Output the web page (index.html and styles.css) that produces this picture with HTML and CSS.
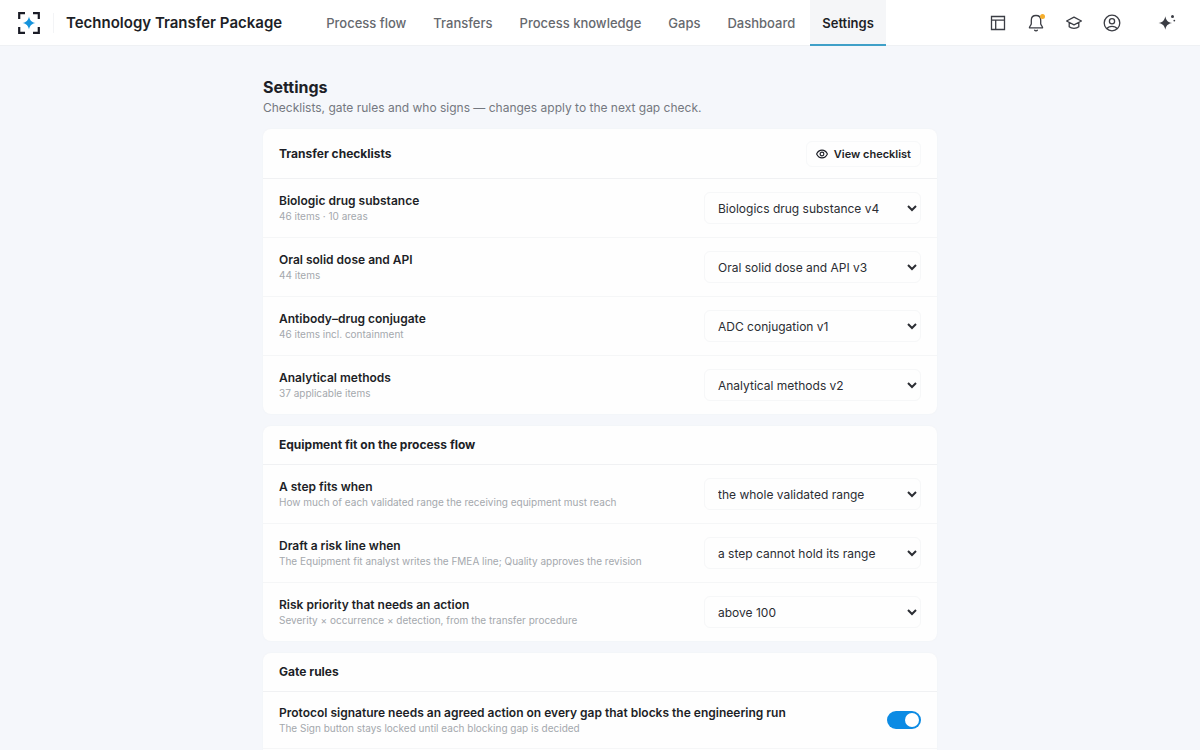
FILE: index.html
```html
<!DOCTYPE html>
<html lang="en">
<head>
<meta charset="utf-8">
<meta name="viewport" content="width=device-width, initial-scale=1">
<title>Settings – Technology Transfer Package</title>
<link rel="stylesheet" href="styles.css">
</head>
<body>
<header class="topbar">
  <a class="logo" href="#" aria-label="Home">
    <svg width="24" height="24" viewBox="0 0 24 24" fill="none">
      <path d="M2.200 8V2.200H8M16 2.200h5.800V8M21.800 16v5.800H16M8 21.800H2.200V16" stroke="#1a1c26" stroke-width="2.200"/>
      <path d="M12 5.500c.9 4 2.500 5.600 6.500 6.500-4 .9-5.600 2.500-6.500 6.500-.9-4-2.500-5.600-6.500-6.500 4-.9 5.600-2.500 6.500-6.500z" fill="#1593dc"/>
    </svg>
  </a>
  <div class="brand">Technology Transfer Package</div>
  <nav class="nav" aria-label="Main">
    <a href="#">Process flow</a>
    <a href="#">Transfers</a>
    <a href="#">Process knowledge</a>
    <a href="#">Gaps</a>
    <a href="#">Dashboard</a>
    <a href="#" class="active" aria-current="page">Settings</a>
  </nav>
  <div class="tools">
    <button type="button" aria-label="Layout">
      <svg width="18" height="18" viewBox="0 0 18 18" fill="none" stroke="currentColor" stroke-width="1.300"><path d="M2.500 2.500h13v13h-13zM2.500 6.200h13M6.700 6.200v9.300"/></svg>
    </button>
    <button type="button" class="bell" aria-label="Notifications">
      <svg width="18" height="18" viewBox="0 0 18 18" fill="none" stroke="currentColor" stroke-width="1.300" stroke-linejoin="round" stroke-linecap="round"><path d="M9 1.500c-3 0-4.700 2.100-4.700 4.800v3.400c0 1.300-1.900 2.500-1.900 4.100h13.200c0-1.600-1.900-2.800-1.900-4.100V6.300c0-2.700-1.700-4.800-4.700-4.800zM7.600 16.200c.6.900 2.200.9 2.800 0"/></svg>
      <span class="dot"></span>
    </button>
    <button type="button" aria-label="Training">
      <svg width="18" height="18" viewBox="0 0 18 18" fill="none" stroke="currentColor" stroke-width="1.300" stroke-linejoin="round"><path d="M9 3.200 16.400 7 9 10.800 1.600 7zM4.200 8.600v4.200c2.300 2.200 7.300 2.200 9.600 0V8.600"/></svg>
    </button>
    <button type="button" aria-label="Account">
      <svg width="18" height="18" viewBox="0 0 18 18" fill="none" stroke="currentColor" stroke-width="1.300"><circle cx="9" cy="9" r="7.800"/><circle cx="9" cy="7.300" r="2.600"/><path d="M4 14.800c1.600-3.300 8.400-3.300 10 0"/></svg>
    </button>
    <button type="button" class="assistant" aria-label="Assistant">
      <svg width="18" height="18" viewBox="0 0 18 18" fill="currentColor"><path d="M7.300 2.200c.8 4.200 2.600 6 6.800 6.800-4.200.8-6 2.600-6.800 6.800C6.500 11.600 4.700 9.800.5 9c4.200-.8 6-2.600 6.800-6.800z"/><circle cx="14.500" cy="2.600" r="1.500"/><circle cx="16.300" cy="6.600" r=".9"/></svg>
    </button>
  </div>
</header>

<main class="page">
  <h1>Settings</h1>
  <p class="lead">Checklists, gate rules and who signs — changes apply to the next gap check.</p>

  <section class="card">
    <div class="card-head tall">
      <h2>Transfer checklists</h2>
      <button type="button" class="view">
        <svg width="12" height="12" viewBox="0 0 14 14" fill="none" stroke="currentColor" stroke-width="1.300"><path d="M.7 7c2.800-6 9.800-6 12.600 0-2.800 6-9.800 6-12.600 0z"/><circle cx="7" cy="7" r="2.200"/></svg>
        View checklist
      </button>
    </div>
    <div class="row">
      <div class="text"><label for="bio">Biologic drug substance</label><p>46 items · 10 areas</p></div>
      <select id="bio"><option>Biologics drug substance v4</option></select>
    </div>
    <div class="row">
      <div class="text"><label for="oral">Oral solid dose and API</label><p>44 items</p></div>
      <select id="oral"><option>Oral solid dose and API v3</option></select>
    </div>
    <div class="row">
      <div class="text"><label for="adc">Antibody–drug conjugate</label><p>46 items incl. containment</p></div>
      <select id="adc"><option>ADC conjugation v1</option></select>
    </div>
    <div class="row">
      <div class="text"><label for="methods">Analytical methods</label><p>37 applicable items</p></div>
      <select id="methods"><option>Analytical methods v2</option></select>
    </div>
  </section>

  <section class="card">
    <div class="card-head"><h2>Equipment fit on the process flow</h2></div>
    <div class="row">
      <div class="text"><label for="fit">A step fits when</label><p>How much of each validated range the receiving equipment must reach</p></div>
      <select id="fit"><option>the whole validated range</option></select>
    </div>
    <div class="row">
      <div class="text"><label for="draft">Draft a risk line when</label><p>The Equipment fit analyst writes the FMEA line; Quality approves the revision</p></div>
      <select id="draft"><option>a step cannot hold its range</option></select>
    </div>
    <div class="row">
      <div class="text"><label for="priority">Risk priority that needs an action</label><p>Severity × occurrence × detection, from the transfer procedure</p></div>
      <select id="priority"><option>above 100</option></select>
    </div>
  </section>

  <section class="card">
    <div class="card-head"><h2>Gate rules</h2></div>
    <div class="row">
      <div class="text"><label for="sign">Protocol signature needs an agreed action on every gap that blocks the engineering run</label><p>The Sign button stays locked until each blocking gap is decided</p></div>
      <input id="sign" class="switch" type="checkbox" role="switch" checked>
    </div>
    <div class="row"></div>
  </section>
</main>
</body>
</html>
```
FILE: styles.css
```css
* { box-sizing: border-box; }
html { height: 100%; overflow: hidden; }
body {
  margin: 0;
  min-height: 100%;
  background: #f5f7fb;
  color: #1d1f27;
  font-family: Inter, "Liberation Sans", sans-serif;
  font-size: 13px;
}
h1, h2, p { margin: 0; }
a { color: inherit; text-decoration: none; }
button { font: inherit; color: inherit; background: none; border: 0; padding: 0; }

.topbar {
  display: flex;
  align-items: center;
  height: 46px;
  padding: 0 24px 0 17px;
  background: #fff;
  border-bottom: 1px solid #eff1f4;
}
.logo { display: flex; padding-right: 12px; }
.brand {
  border-left: 1px solid #f3f4f6;
  padding-left: 12px;
  font-size: 15px;
  line-height: 20px;
  font-weight: 600;
  white-space: nowrap;
}
.nav { display: flex; align-self: stretch; margin-left: 32px; gap: 3px; }
.nav a {
  display: flex;
  align-items: center;
  height: 46px;
  padding: 2px 12px 0;
  border-bottom: 2px solid transparent;
  color: #66696e;
  font-weight: 500;
  white-space: nowrap;
}
.nav .active {
  background: #f5f6f8;
  border-bottom-color: #3fa0c8;
  color: #1d1f27;
  font-weight: 600;
}
.tools { display: flex; align-items: center; gap: 20px; margin-left: auto; color: #3b3d44; }
.tools button { display: flex; position: relative; }
.tools .assistant { margin-left: 17px; }
.dot {
  position: absolute;
  top: 0;
  right: 0;
  width: 5px;
  height: 5px;
  border-radius: 50%;
  background: #f5ae2c;
}

.page { max-width: 706px; margin: 0 auto; padding: 31px 16px 0; }
h1 { font-size: 16px; line-height: 20px; font-weight: 700; }
.lead { margin-bottom: 12px; padding-top: 2px; color: #747880; font-size: 12px; line-height: 18px; }

.card {
  margin-bottom: 12px;
  background: #fefefe;
  border-radius: 8px;
  box-shadow: 0 0 2px #eff1f4;
}
.card-head {
  display: flex;
  align-items: center;
  justify-content: space-between;
  min-height: 38px;
  padding: 0 16px;
}
.card-head.tall { min-height: 49px; }
h2 { font-size: 12px; line-height: 16px; font-weight: 700; }
.view {
  display: flex;
  align-items: center;
  gap: 6px;
  height: 26px;
  padding: 0 9px;
  border: 1px solid #f7f8f9;
  border-radius: 6px;
  font-size: 11px;
  font-weight: 600;
}

.row {
  display: flex;
  align-items: center;
  justify-content: space-between;
  gap: 16px;
  padding: 13px 16px;
  border-top: 1px solid #f5f6f7;
}
.card-head + .row { border-top-color: #f0f1f3; }
.text label { display: block; font-size: 12px; line-height: 16px; font-weight: 600; }
.text p { color: #a4a8ad; font-size: 10px; line-height: 14px; }
select {
  width: 217px;
  height: 32px;
  padding: 0 8px 0 9px;
  background: #fefefe;
  border: 1px solid #f6f7f8;
  border-radius: 6px;
  color: #2b2d33;
  font: inherit;
  font-size: 12px;
}
.switch {
  appearance: none;
  flex: none;
  width: 34px;
  height: 18px;
  margin: 0;
  padding: 2px;
  border-radius: 9px;
  background: #c8ccd2;
}
.switch::before {
  content: "";
  display: block;
  width: 14px;
  height: 14px;
  border-radius: 50%;
  background: #fff;
}
.switch:checked { background: #0c8be4; }
.switch:checked::before { margin-left: auto; }
```
